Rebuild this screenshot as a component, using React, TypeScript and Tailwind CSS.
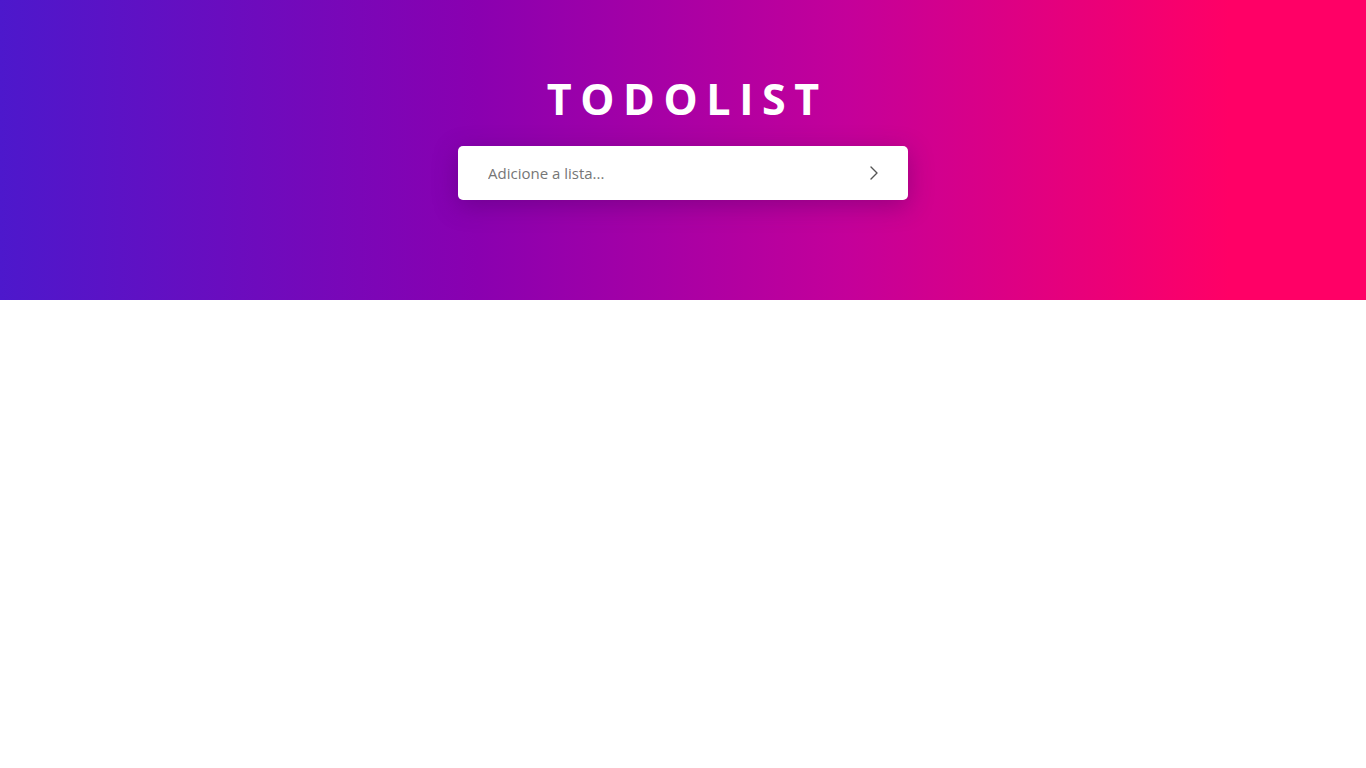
import { ChevronRight } from "lucide-react";

export default function App() {
  return (
    <div className="min-h-screen bg-white font-['Open_Sans',sans-serif]">
      <header className="h-[300px] bg-[linear-gradient(to_right,#4d18cc_0%,#8a00b0_35%,#c4009a_62%,#ff0066_90%)] flex flex-col items-center pt-[74px]">
        <h1 className="text-white font-bold text-[43px] leading-[50px] tracking-[0.2em] pl-[0.2em]">
          TODOLIST
        </h1>
        <form
          className="mt-[22px] w-[450px] h-[54px] bg-white rounded-[5px] shadow-[0_6px_24px_rgba(60,0,90,0.35)] flex items-center pl-[30px] pr-[22px]"
          onSubmit={(e) => e.preventDefault()}
        >
          <input
            type="text"
            placeholder="Adicione a lista..."
            className="flex-1 text-[15px] text-gray-700 placeholder:text-[#767676] outline-none bg-transparent"
          />
          <button type="submit" className="text-[#555] flex items-center">
            <ChevronRight size={24} strokeWidth={1.4} />
          </button>
        </form>
      </header>
    </div>
  );
}
